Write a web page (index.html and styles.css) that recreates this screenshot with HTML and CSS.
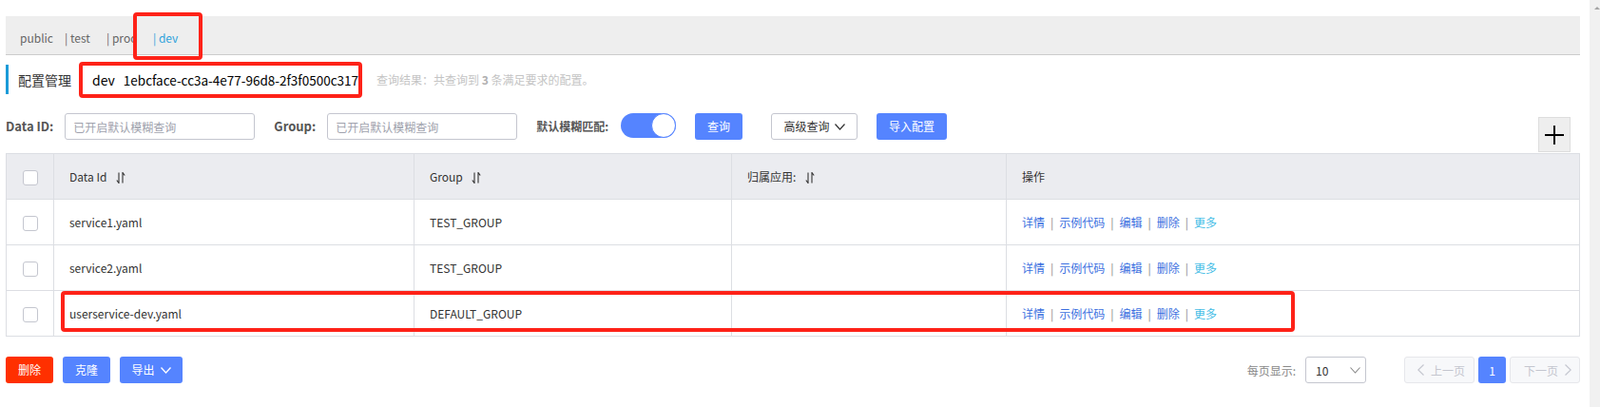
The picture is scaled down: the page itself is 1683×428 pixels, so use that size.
FILE: index.html
```html
<!DOCTYPE html>
<html lang="zh-CN">

<head>
    <meta charset="UTF-8">
    <title>配置管理</title>
    <link rel="stylesheet" href="styles.css">
</head>

<body>
    <div class="page">
        <div class="main">

            <div class="ns-bar">
                <span class="ns-item ns-public">public</span>
                <span class="ns-item ns-test">| test</span>
                <span class="ns-item ns-prod">| prod</span>
                <span class="ns-item active">| dev</span>
            </div>

            <div class="title-row">
                <span class="title">配置管理</span>
                <span class="ns-name">dev</span>
                <span class="ns-id">1ebcface-cc3a-4e77-96d8-2f3f0500c317</span>
                <span class="result">查询结果：共查询到 <strong>3</strong> 条满足要求的配置。</span>
            </div>

            <div class="search-row">
                <label class="label">Data ID:</label>
                <input class="input" type="text" placeholder="已开启默认模糊查询">
                <label class="label">Group:</label>
                <input class="input" type="text" placeholder="已开启默认模糊查询">
                <span class="label-cn">默认模糊匹配:</span>
                <span class="switch"><span class="knob"></span></span>
                <button class="btn primary btn-query">查询</button>
                <button class="btn normal btn-adv">高级查询
                    <svg width="11" height="7" viewBox="0 0 11 7"><polyline points="0.5,0.5 5.5,6 10.5,0.5" fill="none" stroke="#333" stroke-width="1.2"/></svg>
                </button>
                <button class="btn primary btn-import">导入配置</button>
                <button class="add-btn">
                    <svg width="20" height="20" viewBox="0 0 20 20"><path d="M10 0V20M0 10H20" stroke="#000" stroke-width="2"/></svg>
                </button>
            </div>

            <table class="config-table">
                <colgroup>
                    <col style="width: 50px">
                    <col style="width: 379px">
                    <col style="width: 334px">
                    <col style="width: 289px">
                    <col>
                </colgroup>
                <thead>
                    <tr>
                        <th class="check-col"><span class="checkbox"></span></th>
                        <th>Data Id <svg class="sort" width="10" height="12" viewBox="0 0 10 12"><path d="M3 0.5V11.5L0.8 8.5M7 11.5V0.5L9.2 3.5" fill="none" stroke="#333" stroke-width="1.1"/></svg></th>
                        <th>Group <svg class="sort" width="10" height="12" viewBox="0 0 10 12"><path d="M3 0.5V11.5L0.8 8.5M7 11.5V0.5L9.2 3.5" fill="none" stroke="#333" stroke-width="1.1"/></svg></th>
                        <th>归属应用: <svg class="sort" width="10" height="12" viewBox="0 0 10 12"><path d="M3 0.5V11.5L0.8 8.5M7 11.5V0.5L9.2 3.5" fill="none" stroke="#333" stroke-width="1.1"/></svg></th>
                        <th>操作</th>
                    </tr>
                </thead>
                <tbody>
                    <tr>
                        <td class="check-col"><span class="checkbox"></span></td>
                        <td>service1.yaml</td>
                        <td>TEST_GROUP</td>
                        <td></td>
                        <td class="actions">
                            <a>详情</a><span class="sep">|</span><a>示例代码</a><span class="sep">|</span><a>编辑</a><span class="sep">|</span><a>删除</a><span class="sep">|</span><a class="more">更多</a>
                        </td>
                    </tr>
                    <tr>
                        <td class="check-col"><span class="checkbox"></span></td>
                        <td>service2.yaml</td>
                        <td>TEST_GROUP</td>
                        <td></td>
                        <td class="actions">
                            <a>详情</a><span class="sep">|</span><a>示例代码</a><span class="sep">|</span><a>编辑</a><span class="sep">|</span><a>删除</a><span class="sep">|</span><a class="more">更多</a>
                        </td>
                    </tr>
                    <tr>
                        <td class="check-col"><span class="checkbox"></span></td>
                        <td>userservice-dev.yaml</td>
                        <td>DEFAULT_GROUP</td>
                        <td></td>
                        <td class="actions">
                            <a>详情</a><span class="sep">|</span><a>示例代码</a><span class="sep">|</span><a>编辑</a><span class="sep">|</span><a>删除</a><span class="sep">|</span><a class="more">更多</a>
                        </td>
                    </tr>
                </tbody>
            </table>

            <div class="footer">
                <div class="batch">
                    <button class="btn danger">删除</button>
                    <button class="btn primary">克隆</button>
                    <button class="btn primary btn-export">导出
                        <svg width="11" height="7" viewBox="0 0 11 7"><polyline points="0.5,0.5 5.5,6 10.5,0.5" fill="none" stroke="#fff" stroke-width="1.3"/></svg>
                    </button>
                </div>
                <div class="pager">
                    <span class="page-size-label">每页显示:</span>
                    <span class="select">10
                        <svg width="11" height="7" viewBox="0 0 11 7"><polyline points="0.5,0.5 5.5,6 10.5,0.5" fill="none" stroke="#888" stroke-width="1.1"/></svg>
                    </span>
                    <button class="page-btn disabled prev">
                        <svg width="7" height="12" viewBox="0 0 7 12"><polyline points="6.5,0.5 0.8,6 6.5,11.5" fill="none" stroke="#c4c6cf" stroke-width="1.2"/></svg>
                        上一页
                    </button>
                    <button class="page-btn current">1</button>
                    <button class="page-btn disabled next">下一页
                        <svg width="7" height="12" viewBox="0 0 7 12"><polyline points="0.5,0.5 6.2,6 0.5,11.5" fill="none" stroke="#c4c6cf" stroke-width="1.2"/></svg>
                    </button>
                </div>
            </div>

        </div>
        <div class="scroll-track"></div>

        <div class="mark mark-tab"></div>
        <div class="mark mark-ns"></div>
        <div class="mark mark-row"></div>
    </div>
</body>

</html>
```

FILE: styles.css
```css
body {
    margin: 0;
    font-family: "Noto Sans CJK SC", "Liberation Sans", sans-serif;
    font-size: 12px;
    color: #333;
    background: #fff;
}

.page {
    position: relative;
    display: flex;
    height: 428px;
    overflow: hidden;
}

.main {
    flex: 1;
    padding: 17px 10px 0 6px;
}

.scroll-track {
    width: 11px;
    background: #f1f1f1;
}

.scroll-track::before {
    content: "";
    display: block;
    margin: 7px 0 0 5px;
    width: 0;
    height: 0;
    border-left: 3px solid transparent;
    border-right: 3px solid transparent;
    border-bottom: 3px solid #a3a3a3;
}

/* namespace tabs */
.ns-bar {
    height: 34px;
    padding: 6px 0 0 15px;
    background: #eee;
    border-bottom: 1px solid #ccc;
    display: flex;
    align-items: center;
}

.ns-item {
    color: #666;
    line-height: 20px;
    white-space: pre;
}

.ns-public {
    width: 47px;
}

.ns-test {
    width: 44px;
}

.ns-prod {
    width: 49px;
}

.ns-item.active {
    color: #2fa3dc;
}

/* title */
.title-row {
    margin-top: 10px;
    height: 31px;
    border-left: 3px solid #1b9bd8;
    padding-left: 10px;
    display: flex;
    align-items: center;
}

.title {
    font-size: 14px;
    color: #333;
}

.ns-name {
    margin-left: 22px;
    font-size: 14px;
    color: #000;
}

.ns-id {
    margin-left: 9px;
    font-size: 13.5px;
    color: #000;
}

.result {
    margin-left: 19px;
    color: #c4c4c4;
}

.result strong {
    color: #b0b0b0;
}

/* search */
.search-row {
    margin-top: 20px;
    height: 42px;
    display: flex;
    align-items: flex-start;
}

.label {
    font-size: 13px;
    font-weight: bold;
    color: #555;
    line-height: 28px;
    margin-right: 12px;
}

.label-cn {
    font-weight: bold;
    color: #555;
    line-height: 28px;
    margin-right: 13px;
}

.input {
    width: 200px;
    height: 28px;
    box-sizing: border-box;
    border: 1px solid #c4c6cf;
    border-radius: 3px;
    padding: 0 8px;
    margin-right: 20px;
    font-family: inherit;
    font-size: 12px;
    outline: none;
}

.input::placeholder {
    color: #a0a2ad;
}

.switch {
    width: 58px;
    height: 26px;
    border-radius: 13px;
    background: #5584ff;
    display: flex;
    justify-content: flex-end;
    margin-right: 20px;
}

.knob {
    width: 26px;
    height: 26px;
    box-sizing: border-box;
    border-radius: 50%;
    background: #fff;
    border: 1px solid #5584ff;
}

.btn {
    height: 28px;
    border-radius: 3px;
    border: none;
    padding: 0 13px;
    font-family: inherit;
    font-size: 12px;
    line-height: 28px;
    white-space: nowrap;
    cursor: pointer;
    display: inline-flex;
    align-items: center;
    justify-content: center;
    gap: 5px;
}

.btn.primary {
    background: #5584ff;
    color: #fff;
}

.btn.danger {
    background: #ff3000;
    color: #fff;
}

.btn.normal {
    background: #fff;
    color: #333;
    border: 1px solid #c4c6cf;
}

.btn-query {
    width: 50px;
    padding: 0;
    margin-right: 30px;
}

.btn-adv {
    width: 91px;
    padding: 0;
    margin-right: 20px;
}

.btn-import {
    width: 74px;
    padding: 0;
}

.add-btn {
    margin: 4px 10px 0 auto;
    width: 34px;
    height: 37px;
    padding: 0;
    background: #eee;
    border: 1px solid #ddd;
    display: flex;
    align-items: center;
    justify-content: center;
}

/* table */
.config-table {
    width: 100%;
    border-collapse: collapse;
    border: 1px solid #dcdee3;
    table-layout: fixed;
}

.config-table th,
.config-table td {
    height: 47px;
    padding: 0 16px;
    text-align: left;
    font-weight: normal;
    border: 1px solid #dcdee3;
    color: #333;
}

.config-table th {
    background: #ebecf0;
}

.config-table .check-col {
    padding: 0;
    text-align: center;
}

.checkbox {
    display: inline-block;
    vertical-align: middle;
    width: 16px;
    height: 16px;
    box-sizing: border-box;
    border: 1px solid #c4c6cf;
    border-radius: 3px;
    background: #fff;
}

.sort {
    margin-left: 7px;
    vertical-align: -2px;
}

.actions a {
    color: #3b6fe0;
}

.actions a.more {
    color: #45bde6;
}

.sep {
    color: #888;
    margin: 0 6px;
}

/* footer */
.footer {
    margin-top: 21px;
    display: flex;
    justify-content: space-between;
    align-items: center;
}

.batch {
    display: flex;
    gap: 10px;
}

.batch .btn {
    width: 50px;
    padding: 0;
}

.batch .btn-export {
    width: 66px;
    gap: 6px;
}

.pager {
    display: flex;
    align-items: center;
}

.page-size-label {
    color: #888;
    margin-right: 10px;
}

.select {
    width: 64px;
    height: 28px;
    box-sizing: border-box;
    border: 1px solid #c4c6cf;
    border-radius: 3px;
    padding: 0 5px 0 10px;
    display: flex;
    align-items: center;
    justify-content: space-between;
    margin-right: 40px;
}

.page-btn {
    height: 28px;
    border-radius: 3px;
    font-family: inherit;
    font-size: 12px;
    display: inline-flex;
    align-items: center;
    gap: 7px;
    padding: 0;
}

.page-btn.disabled {
    width: 74px;
    background: #f7f8fa;
    border: 1px solid #e6e7eb;
    color: #c4c6cf;
}

.page-btn.prev {
    padding-left: 13px;
}

.page-btn.next {
    padding-left: 14px;
}

.page-btn.current {
    width: 29px;
    margin: 0 4px;
    justify-content: center;
    background: #5584ff;
    border: none;
    color: #fff;
}

/* red annotation boxes */
.mark {
    position: absolute;
    border: 4px solid #fe2218;
    border-radius: 4px;
    box-sizing: border-box;
}

.mark-tab {
    left: 140px;
    top: 13px;
    width: 73px;
    height: 50px;
}

.mark-ns {
    left: 83px;
    top: 65px;
    width: 298px;
    height: 38px;
}

.mark-row {
    left: 64px;
    top: 306px;
    width: 1298px;
    height: 43px;
}
```
